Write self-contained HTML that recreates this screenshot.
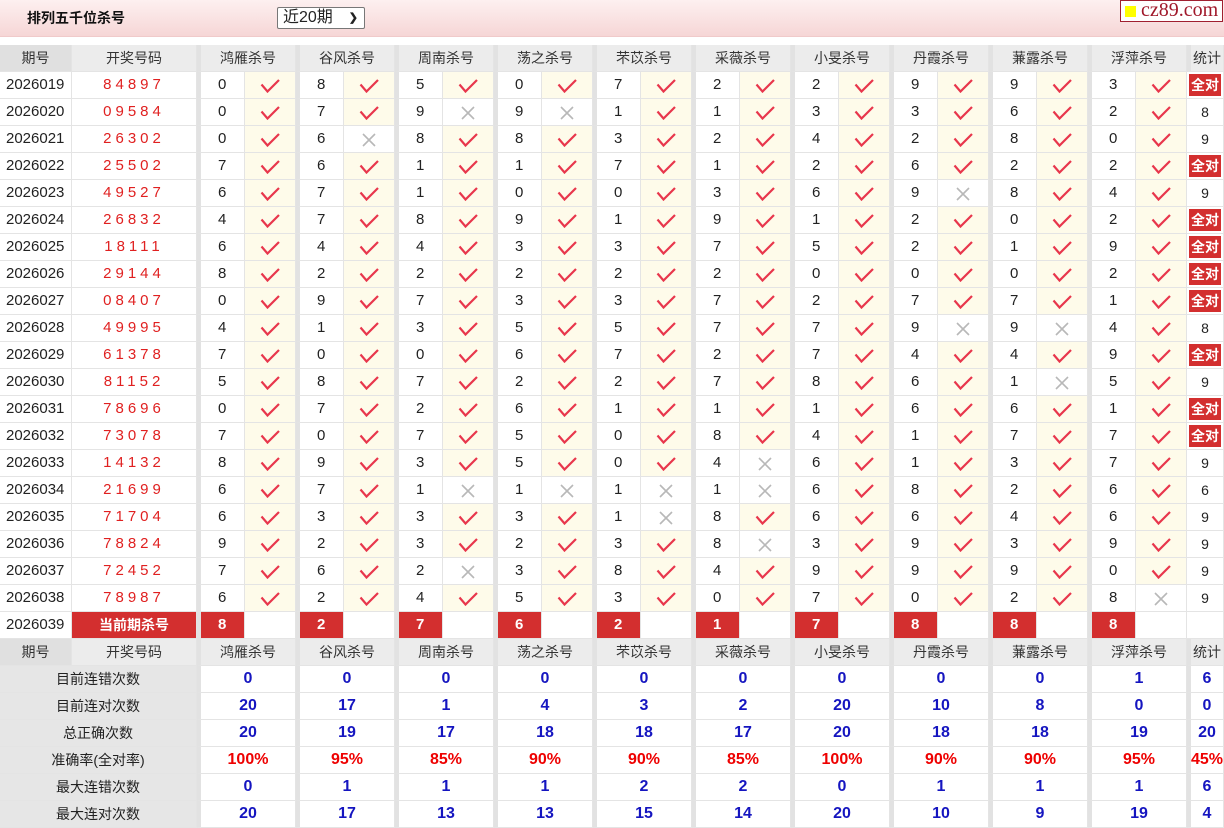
<!DOCTYPE html>
<html><head><meta charset="utf-8">
<style>
*{box-sizing:border-box;margin:0;padding:0}
body{width:1224px;height:827px;overflow:hidden;background:#fff;font-family:"Liberation Sans","Noto Sans CJK SC",sans-serif;font-size:14px;color:#222}
.top{position:absolute;left:0;top:0;width:1224px;height:37px;background:linear-gradient(#fdf0f0,#f6d6d6);border-bottom:1px solid #f0caca}
.title{position:absolute;left:27px;top:9px;font-weight:bold;font-size:14px;color:#111;line-height:18px}
.sel{position:absolute;left:277px;top:7px;width:88px;height:22px;border:1px solid #777;border-radius:2px;background:#fff;font-size:16px;padding-left:5px;line-height:20px}
.sel b{position:absolute;right:6px;top:0;font-size:11px}
.logo{position:absolute;left:1120px;top:0;width:103px;height:22px;border:1px solid #a02030;background:#fff;font-family:"Liberation Serif",serif;font-size:20px;color:#a0182a;line-height:19px;padding-left:20px}
.logo i{position:absolute;left:4px;top:5px;width:11px;height:11px;background:#ff0}
table{position:absolute;left:0;top:45px;border-collapse:separate;border-spacing:0;table-layout:fixed;width:1224px}
tr{height:27px}
td{height:27px;line-height:26px;border-right:1px solid #e4e4e4;border-bottom:1px solid #e4e4e4;text-align:center;padding:0;white-space:nowrap;overflow:hidden;font-size:14px}
td.p{text-align:left;padding-left:6px;font-size:15px}
.h td{background:#ececec;color:#333}
.h td.q{background:#e0e0e0}
td.n{border-left:4px solid #e2e2e2;text-align:left;padding-left:17px;font-size:15px}
td.c{background:#fefbea}
td.w{background:#fff}
.r{color:#e02020;letter-spacing:4px;font-size:15px}
.a{background:#d32f2f!important;color:#fff;font-weight:bold}
td.qd{padding:2px;line-height:22px}
td.qd span{display:block;background:#d32f2f;color:#fff;font-weight:bold;height:22px;line-height:22px}
.s td{background:#fff}
.s td.l{background:#e6e6e6;color:#222}
.s td.v{font-weight:bold;color:#1515c0;font-size:16px;border-left:4px solid #e2e2e2}
.s td.rd{color:#e00}
td svg{display:inline-block;vertical-align:middle}
</style></head><body>
<svg width="0" height="0" style="position:absolute"><defs>
<symbol id="k" viewBox="0 0 20 14"><path d="M1.5 5.5 L7.5 12.5 L19 1" fill="none" stroke="#e8364c" stroke-width="2.2"/></symbol>
<symbol id="x" viewBox="0 0 14 14"><path d="M1 1 L13 13 M13 1 L1 13" fill="none" stroke="#b8b8b8" stroke-width="1.6"/></symbol>
</defs></svg>
<div class="top"><div class="title">排列五千位杀号</div><div class="sel">近20期<b>&#10095;</b></div><div class="logo"><i></i>cz89.com</div></div>
<table id="t">
<colgroup><col style="width:72px"><col style="width:125px"><col style="width:48px"><col style="width:51px"><col style="width:48px"><col style="width:51px"><col style="width:48px"><col style="width:51px"><col style="width:48px"><col style="width:51px"><col style="width:48px"><col style="width:51px"><col style="width:48px"><col style="width:51px"><col style="width:48px"><col style="width:51px"><col style="width:48px"><col style="width:51px"><col style="width:48px"><col style="width:51px"><col style="width:48px"><col style="width:51px"><col style="width:37px"></colgroup>
<tr class="h"><td class="q">期号</td><td>开奖号码</td><td colspan="2" style="border-left:4px solid #e2e2e2">鸿雁杀号</td><td colspan="2" style="border-left:4px solid #e2e2e2">谷风杀号</td><td colspan="2" style="border-left:4px solid #e2e2e2">周南杀号</td><td colspan="2" style="border-left:4px solid #e2e2e2">荡之杀号</td><td colspan="2" style="border-left:4px solid #e2e2e2">芣苡杀号</td><td colspan="2" style="border-left:4px solid #e2e2e2">采薇杀号</td><td colspan="2" style="border-left:4px solid #e2e2e2">小旻杀号</td><td colspan="2" style="border-left:4px solid #e2e2e2">丹霞杀号</td><td colspan="2" style="border-left:4px solid #e2e2e2">蒹露杀号</td><td colspan="2" style="border-left:4px solid #e2e2e2">浮萍杀号</td><td style="border-left:4px solid #e2e2e2">统计</td></tr>
<tr><td class="p">2026019</td><td class="r">84897</td><td class="n">0</td><td class="c"><svg width="20" height="14"><use href="#k"/></svg></td><td class="n">8</td><td class="c"><svg width="20" height="14"><use href="#k"/></svg></td><td class="n">5</td><td class="c"><svg width="20" height="14"><use href="#k"/></svg></td><td class="n">0</td><td class="c"><svg width="20" height="14"><use href="#k"/></svg></td><td class="n">7</td><td class="c"><svg width="20" height="14"><use href="#k"/></svg></td><td class="n">2</td><td class="c"><svg width="20" height="14"><use href="#k"/></svg></td><td class="n">2</td><td class="c"><svg width="20" height="14"><use href="#k"/></svg></td><td class="n">9</td><td class="c"><svg width="20" height="14"><use href="#k"/></svg></td><td class="n">9</td><td class="c"><svg width="20" height="14"><use href="#k"/></svg></td><td class="n">3</td><td class="c"><svg width="20" height="14"><use href="#k"/></svg></td><td class="qd"><span>全对</span></td></tr>
<tr><td class="p">2026020</td><td class="r">09584</td><td class="n">0</td><td class="c"><svg width="20" height="14"><use href="#k"/></svg></td><td class="n">7</td><td class="c"><svg width="20" height="14"><use href="#k"/></svg></td><td class="n">9</td><td class="w"><svg width="14" height="14"><use href="#x"/></svg></td><td class="n">9</td><td class="w"><svg width="14" height="14"><use href="#x"/></svg></td><td class="n">1</td><td class="c"><svg width="20" height="14"><use href="#k"/></svg></td><td class="n">1</td><td class="c"><svg width="20" height="14"><use href="#k"/></svg></td><td class="n">3</td><td class="c"><svg width="20" height="14"><use href="#k"/></svg></td><td class="n">3</td><td class="c"><svg width="20" height="14"><use href="#k"/></svg></td><td class="n">6</td><td class="c"><svg width="20" height="14"><use href="#k"/></svg></td><td class="n">2</td><td class="c"><svg width="20" height="14"><use href="#k"/></svg></td><td>8</td></tr>
<tr><td class="p">2026021</td><td class="r">26302</td><td class="n">0</td><td class="c"><svg width="20" height="14"><use href="#k"/></svg></td><td class="n">6</td><td class="w"><svg width="14" height="14"><use href="#x"/></svg></td><td class="n">8</td><td class="c"><svg width="20" height="14"><use href="#k"/></svg></td><td class="n">8</td><td class="c"><svg width="20" height="14"><use href="#k"/></svg></td><td class="n">3</td><td class="c"><svg width="20" height="14"><use href="#k"/></svg></td><td class="n">2</td><td class="c"><svg width="20" height="14"><use href="#k"/></svg></td><td class="n">4</td><td class="c"><svg width="20" height="14"><use href="#k"/></svg></td><td class="n">2</td><td class="c"><svg width="20" height="14"><use href="#k"/></svg></td><td class="n">8</td><td class="c"><svg width="20" height="14"><use href="#k"/></svg></td><td class="n">0</td><td class="c"><svg width="20" height="14"><use href="#k"/></svg></td><td>9</td></tr>
<tr><td class="p">2026022</td><td class="r">25502</td><td class="n">7</td><td class="c"><svg width="20" height="14"><use href="#k"/></svg></td><td class="n">6</td><td class="c"><svg width="20" height="14"><use href="#k"/></svg></td><td class="n">1</td><td class="c"><svg width="20" height="14"><use href="#k"/></svg></td><td class="n">1</td><td class="c"><svg width="20" height="14"><use href="#k"/></svg></td><td class="n">7</td><td class="c"><svg width="20" height="14"><use href="#k"/></svg></td><td class="n">1</td><td class="c"><svg width="20" height="14"><use href="#k"/></svg></td><td class="n">2</td><td class="c"><svg width="20" height="14"><use href="#k"/></svg></td><td class="n">6</td><td class="c"><svg width="20" height="14"><use href="#k"/></svg></td><td class="n">2</td><td class="c"><svg width="20" height="14"><use href="#k"/></svg></td><td class="n">2</td><td class="c"><svg width="20" height="14"><use href="#k"/></svg></td><td class="qd"><span>全对</span></td></tr>
<tr><td class="p">2026023</td><td class="r">49527</td><td class="n">6</td><td class="c"><svg width="20" height="14"><use href="#k"/></svg></td><td class="n">7</td><td class="c"><svg width="20" height="14"><use href="#k"/></svg></td><td class="n">1</td><td class="c"><svg width="20" height="14"><use href="#k"/></svg></td><td class="n">0</td><td class="c"><svg width="20" height="14"><use href="#k"/></svg></td><td class="n">0</td><td class="c"><svg width="20" height="14"><use href="#k"/></svg></td><td class="n">3</td><td class="c"><svg width="20" height="14"><use href="#k"/></svg></td><td class="n">6</td><td class="c"><svg width="20" height="14"><use href="#k"/></svg></td><td class="n">9</td><td class="w"><svg width="14" height="14"><use href="#x"/></svg></td><td class="n">8</td><td class="c"><svg width="20" height="14"><use href="#k"/></svg></td><td class="n">4</td><td class="c"><svg width="20" height="14"><use href="#k"/></svg></td><td>9</td></tr>
<tr><td class="p">2026024</td><td class="r">26832</td><td class="n">4</td><td class="c"><svg width="20" height="14"><use href="#k"/></svg></td><td class="n">7</td><td class="c"><svg width="20" height="14"><use href="#k"/></svg></td><td class="n">8</td><td class="c"><svg width="20" height="14"><use href="#k"/></svg></td><td class="n">9</td><td class="c"><svg width="20" height="14"><use href="#k"/></svg></td><td class="n">1</td><td class="c"><svg width="20" height="14"><use href="#k"/></svg></td><td class="n">9</td><td class="c"><svg width="20" height="14"><use href="#k"/></svg></td><td class="n">1</td><td class="c"><svg width="20" height="14"><use href="#k"/></svg></td><td class="n">2</td><td class="c"><svg width="20" height="14"><use href="#k"/></svg></td><td class="n">0</td><td class="c"><svg width="20" height="14"><use href="#k"/></svg></td><td class="n">2</td><td class="c"><svg width="20" height="14"><use href="#k"/></svg></td><td class="qd"><span>全对</span></td></tr>
<tr><td class="p">2026025</td><td class="r">18111</td><td class="n">6</td><td class="c"><svg width="20" height="14"><use href="#k"/></svg></td><td class="n">4</td><td class="c"><svg width="20" height="14"><use href="#k"/></svg></td><td class="n">4</td><td class="c"><svg width="20" height="14"><use href="#k"/></svg></td><td class="n">3</td><td class="c"><svg width="20" height="14"><use href="#k"/></svg></td><td class="n">3</td><td class="c"><svg width="20" height="14"><use href="#k"/></svg></td><td class="n">7</td><td class="c"><svg width="20" height="14"><use href="#k"/></svg></td><td class="n">5</td><td class="c"><svg width="20" height="14"><use href="#k"/></svg></td><td class="n">2</td><td class="c"><svg width="20" height="14"><use href="#k"/></svg></td><td class="n">1</td><td class="c"><svg width="20" height="14"><use href="#k"/></svg></td><td class="n">9</td><td class="c"><svg width="20" height="14"><use href="#k"/></svg></td><td class="qd"><span>全对</span></td></tr>
<tr><td class="p">2026026</td><td class="r">29144</td><td class="n">8</td><td class="c"><svg width="20" height="14"><use href="#k"/></svg></td><td class="n">2</td><td class="c"><svg width="20" height="14"><use href="#k"/></svg></td><td class="n">2</td><td class="c"><svg width="20" height="14"><use href="#k"/></svg></td><td class="n">2</td><td class="c"><svg width="20" height="14"><use href="#k"/></svg></td><td class="n">2</td><td class="c"><svg width="20" height="14"><use href="#k"/></svg></td><td class="n">2</td><td class="c"><svg width="20" height="14"><use href="#k"/></svg></td><td class="n">0</td><td class="c"><svg width="20" height="14"><use href="#k"/></svg></td><td class="n">0</td><td class="c"><svg width="20" height="14"><use href="#k"/></svg></td><td class="n">0</td><td class="c"><svg width="20" height="14"><use href="#k"/></svg></td><td class="n">2</td><td class="c"><svg width="20" height="14"><use href="#k"/></svg></td><td class="qd"><span>全对</span></td></tr>
<tr><td class="p">2026027</td><td class="r">08407</td><td class="n">0</td><td class="c"><svg width="20" height="14"><use href="#k"/></svg></td><td class="n">9</td><td class="c"><svg width="20" height="14"><use href="#k"/></svg></td><td class="n">7</td><td class="c"><svg width="20" height="14"><use href="#k"/></svg></td><td class="n">3</td><td class="c"><svg width="20" height="14"><use href="#k"/></svg></td><td class="n">3</td><td class="c"><svg width="20" height="14"><use href="#k"/></svg></td><td class="n">7</td><td class="c"><svg width="20" height="14"><use href="#k"/></svg></td><td class="n">2</td><td class="c"><svg width="20" height="14"><use href="#k"/></svg></td><td class="n">7</td><td class="c"><svg width="20" height="14"><use href="#k"/></svg></td><td class="n">7</td><td class="c"><svg width="20" height="14"><use href="#k"/></svg></td><td class="n">1</td><td class="c"><svg width="20" height="14"><use href="#k"/></svg></td><td class="qd"><span>全对</span></td></tr>
<tr><td class="p">2026028</td><td class="r">49995</td><td class="n">4</td><td class="c"><svg width="20" height="14"><use href="#k"/></svg></td><td class="n">1</td><td class="c"><svg width="20" height="14"><use href="#k"/></svg></td><td class="n">3</td><td class="c"><svg width="20" height="14"><use href="#k"/></svg></td><td class="n">5</td><td class="c"><svg width="20" height="14"><use href="#k"/></svg></td><td class="n">5</td><td class="c"><svg width="20" height="14"><use href="#k"/></svg></td><td class="n">7</td><td class="c"><svg width="20" height="14"><use href="#k"/></svg></td><td class="n">7</td><td class="c"><svg width="20" height="14"><use href="#k"/></svg></td><td class="n">9</td><td class="w"><svg width="14" height="14"><use href="#x"/></svg></td><td class="n">9</td><td class="w"><svg width="14" height="14"><use href="#x"/></svg></td><td class="n">4</td><td class="c"><svg width="20" height="14"><use href="#k"/></svg></td><td>8</td></tr>
<tr><td class="p">2026029</td><td class="r">61378</td><td class="n">7</td><td class="c"><svg width="20" height="14"><use href="#k"/></svg></td><td class="n">0</td><td class="c"><svg width="20" height="14"><use href="#k"/></svg></td><td class="n">0</td><td class="c"><svg width="20" height="14"><use href="#k"/></svg></td><td class="n">6</td><td class="c"><svg width="20" height="14"><use href="#k"/></svg></td><td class="n">7</td><td class="c"><svg width="20" height="14"><use href="#k"/></svg></td><td class="n">2</td><td class="c"><svg width="20" height="14"><use href="#k"/></svg></td><td class="n">7</td><td class="c"><svg width="20" height="14"><use href="#k"/></svg></td><td class="n">4</td><td class="c"><svg width="20" height="14"><use href="#k"/></svg></td><td class="n">4</td><td class="c"><svg width="20" height="14"><use href="#k"/></svg></td><td class="n">9</td><td class="c"><svg width="20" height="14"><use href="#k"/></svg></td><td class="qd"><span>全对</span></td></tr>
<tr><td class="p">2026030</td><td class="r">81152</td><td class="n">5</td><td class="c"><svg width="20" height="14"><use href="#k"/></svg></td><td class="n">8</td><td class="c"><svg width="20" height="14"><use href="#k"/></svg></td><td class="n">7</td><td class="c"><svg width="20" height="14"><use href="#k"/></svg></td><td class="n">2</td><td class="c"><svg width="20" height="14"><use href="#k"/></svg></td><td class="n">2</td><td class="c"><svg width="20" height="14"><use href="#k"/></svg></td><td class="n">7</td><td class="c"><svg width="20" height="14"><use href="#k"/></svg></td><td class="n">8</td><td class="c"><svg width="20" height="14"><use href="#k"/></svg></td><td class="n">6</td><td class="c"><svg width="20" height="14"><use href="#k"/></svg></td><td class="n">1</td><td class="w"><svg width="14" height="14"><use href="#x"/></svg></td><td class="n">5</td><td class="c"><svg width="20" height="14"><use href="#k"/></svg></td><td>9</td></tr>
<tr><td class="p">2026031</td><td class="r">78696</td><td class="n">0</td><td class="c"><svg width="20" height="14"><use href="#k"/></svg></td><td class="n">7</td><td class="c"><svg width="20" height="14"><use href="#k"/></svg></td><td class="n">2</td><td class="c"><svg width="20" height="14"><use href="#k"/></svg></td><td class="n">6</td><td class="c"><svg width="20" height="14"><use href="#k"/></svg></td><td class="n">1</td><td class="c"><svg width="20" height="14"><use href="#k"/></svg></td><td class="n">1</td><td class="c"><svg width="20" height="14"><use href="#k"/></svg></td><td class="n">1</td><td class="c"><svg width="20" height="14"><use href="#k"/></svg></td><td class="n">6</td><td class="c"><svg width="20" height="14"><use href="#k"/></svg></td><td class="n">6</td><td class="c"><svg width="20" height="14"><use href="#k"/></svg></td><td class="n">1</td><td class="c"><svg width="20" height="14"><use href="#k"/></svg></td><td class="qd"><span>全对</span></td></tr>
<tr><td class="p">2026032</td><td class="r">73078</td><td class="n">7</td><td class="c"><svg width="20" height="14"><use href="#k"/></svg></td><td class="n">0</td><td class="c"><svg width="20" height="14"><use href="#k"/></svg></td><td class="n">7</td><td class="c"><svg width="20" height="14"><use href="#k"/></svg></td><td class="n">5</td><td class="c"><svg width="20" height="14"><use href="#k"/></svg></td><td class="n">0</td><td class="c"><svg width="20" height="14"><use href="#k"/></svg></td><td class="n">8</td><td class="c"><svg width="20" height="14"><use href="#k"/></svg></td><td class="n">4</td><td class="c"><svg width="20" height="14"><use href="#k"/></svg></td><td class="n">1</td><td class="c"><svg width="20" height="14"><use href="#k"/></svg></td><td class="n">7</td><td class="c"><svg width="20" height="14"><use href="#k"/></svg></td><td class="n">7</td><td class="c"><svg width="20" height="14"><use href="#k"/></svg></td><td class="qd"><span>全对</span></td></tr>
<tr><td class="p">2026033</td><td class="r">14132</td><td class="n">8</td><td class="c"><svg width="20" height="14"><use href="#k"/></svg></td><td class="n">9</td><td class="c"><svg width="20" height="14"><use href="#k"/></svg></td><td class="n">3</td><td class="c"><svg width="20" height="14"><use href="#k"/></svg></td><td class="n">5</td><td class="c"><svg width="20" height="14"><use href="#k"/></svg></td><td class="n">0</td><td class="c"><svg width="20" height="14"><use href="#k"/></svg></td><td class="n">4</td><td class="w"><svg width="14" height="14"><use href="#x"/></svg></td><td class="n">6</td><td class="c"><svg width="20" height="14"><use href="#k"/></svg></td><td class="n">1</td><td class="c"><svg width="20" height="14"><use href="#k"/></svg></td><td class="n">3</td><td class="c"><svg width="20" height="14"><use href="#k"/></svg></td><td class="n">7</td><td class="c"><svg width="20" height="14"><use href="#k"/></svg></td><td>9</td></tr>
<tr><td class="p">2026034</td><td class="r">21699</td><td class="n">6</td><td class="c"><svg width="20" height="14"><use href="#k"/></svg></td><td class="n">7</td><td class="c"><svg width="20" height="14"><use href="#k"/></svg></td><td class="n">1</td><td class="w"><svg width="14" height="14"><use href="#x"/></svg></td><td class="n">1</td><td class="w"><svg width="14" height="14"><use href="#x"/></svg></td><td class="n">1</td><td class="w"><svg width="14" height="14"><use href="#x"/></svg></td><td class="n">1</td><td class="w"><svg width="14" height="14"><use href="#x"/></svg></td><td class="n">6</td><td class="c"><svg width="20" height="14"><use href="#k"/></svg></td><td class="n">8</td><td class="c"><svg width="20" height="14"><use href="#k"/></svg></td><td class="n">2</td><td class="c"><svg width="20" height="14"><use href="#k"/></svg></td><td class="n">6</td><td class="c"><svg width="20" height="14"><use href="#k"/></svg></td><td>6</td></tr>
<tr><td class="p">2026035</td><td class="r">71704</td><td class="n">6</td><td class="c"><svg width="20" height="14"><use href="#k"/></svg></td><td class="n">3</td><td class="c"><svg width="20" height="14"><use href="#k"/></svg></td><td class="n">3</td><td class="c"><svg width="20" height="14"><use href="#k"/></svg></td><td class="n">3</td><td class="c"><svg width="20" height="14"><use href="#k"/></svg></td><td class="n">1</td><td class="w"><svg width="14" height="14"><use href="#x"/></svg></td><td class="n">8</td><td class="c"><svg width="20" height="14"><use href="#k"/></svg></td><td class="n">6</td><td class="c"><svg width="20" height="14"><use href="#k"/></svg></td><td class="n">6</td><td class="c"><svg width="20" height="14"><use href="#k"/></svg></td><td class="n">4</td><td class="c"><svg width="20" height="14"><use href="#k"/></svg></td><td class="n">6</td><td class="c"><svg width="20" height="14"><use href="#k"/></svg></td><td>9</td></tr>
<tr><td class="p">2026036</td><td class="r">78824</td><td class="n">9</td><td class="c"><svg width="20" height="14"><use href="#k"/></svg></td><td class="n">2</td><td class="c"><svg width="20" height="14"><use href="#k"/></svg></td><td class="n">3</td><td class="c"><svg width="20" height="14"><use href="#k"/></svg></td><td class="n">2</td><td class="c"><svg width="20" height="14"><use href="#k"/></svg></td><td class="n">3</td><td class="c"><svg width="20" height="14"><use href="#k"/></svg></td><td class="n">8</td><td class="w"><svg width="14" height="14"><use href="#x"/></svg></td><td class="n">3</td><td class="c"><svg width="20" height="14"><use href="#k"/></svg></td><td class="n">9</td><td class="c"><svg width="20" height="14"><use href="#k"/></svg></td><td class="n">3</td><td class="c"><svg width="20" height="14"><use href="#k"/></svg></td><td class="n">9</td><td class="c"><svg width="20" height="14"><use href="#k"/></svg></td><td>9</td></tr>
<tr><td class="p">2026037</td><td class="r">72452</td><td class="n">7</td><td class="c"><svg width="20" height="14"><use href="#k"/></svg></td><td class="n">6</td><td class="c"><svg width="20" height="14"><use href="#k"/></svg></td><td class="n">2</td><td class="w"><svg width="14" height="14"><use href="#x"/></svg></td><td class="n">3</td><td class="c"><svg width="20" height="14"><use href="#k"/></svg></td><td class="n">8</td><td class="c"><svg width="20" height="14"><use href="#k"/></svg></td><td class="n">4</td><td class="c"><svg width="20" height="14"><use href="#k"/></svg></td><td class="n">9</td><td class="c"><svg width="20" height="14"><use href="#k"/></svg></td><td class="n">9</td><td class="c"><svg width="20" height="14"><use href="#k"/></svg></td><td class="n">9</td><td class="c"><svg width="20" height="14"><use href="#k"/></svg></td><td class="n">0</td><td class="c"><svg width="20" height="14"><use href="#k"/></svg></td><td>9</td></tr>
<tr><td class="p">2026038</td><td class="r">78987</td><td class="n">6</td><td class="c"><svg width="20" height="14"><use href="#k"/></svg></td><td class="n">2</td><td class="c"><svg width="20" height="14"><use href="#k"/></svg></td><td class="n">4</td><td class="c"><svg width="20" height="14"><use href="#k"/></svg></td><td class="n">5</td><td class="c"><svg width="20" height="14"><use href="#k"/></svg></td><td class="n">3</td><td class="c"><svg width="20" height="14"><use href="#k"/></svg></td><td class="n">0</td><td class="c"><svg width="20" height="14"><use href="#k"/></svg></td><td class="n">7</td><td class="c"><svg width="20" height="14"><use href="#k"/></svg></td><td class="n">0</td><td class="c"><svg width="20" height="14"><use href="#k"/></svg></td><td class="n">2</td><td class="c"><svg width="20" height="14"><use href="#k"/></svg></td><td class="n">8</td><td class="w"><svg width="14" height="14"><use href="#x"/></svg></td><td>9</td></tr>
<tr><td class="p">2026039</td><td class="a">当前期杀号</td><td class="n a">8</td><td class="w"></td><td class="n a">2</td><td class="w"></td><td class="n a">7</td><td class="w"></td><td class="n a">6</td><td class="w"></td><td class="n a">2</td><td class="w"></td><td class="n a">1</td><td class="w"></td><td class="n a">7</td><td class="w"></td><td class="n a">8</td><td class="w"></td><td class="n a">8</td><td class="w"></td><td class="n a">8</td><td class="w"></td><td></td></tr>
<tr class="h"><td class="q" style="text-align:center">期号</td><td>开奖号码</td><td colspan="2" style="border-left:4px solid #e2e2e2">鸿雁杀号</td><td colspan="2" style="border-left:4px solid #e2e2e2">谷风杀号</td><td colspan="2" style="border-left:4px solid #e2e2e2">周南杀号</td><td colspan="2" style="border-left:4px solid #e2e2e2">荡之杀号</td><td colspan="2" style="border-left:4px solid #e2e2e2">芣苡杀号</td><td colspan="2" style="border-left:4px solid #e2e2e2">采薇杀号</td><td colspan="2" style="border-left:4px solid #e2e2e2">小旻杀号</td><td colspan="2" style="border-left:4px solid #e2e2e2">丹霞杀号</td><td colspan="2" style="border-left:4px solid #e2e2e2">蒹露杀号</td><td colspan="2" style="border-left:4px solid #e2e2e2">浮萍杀号</td><td style="border-left:4px solid #e2e2e2">统计</td></tr>
<tr class="s"><td class="l" colspan="2">目前连错次数</td><td class="v" colspan="2">0</td><td class="v" colspan="2">0</td><td class="v" colspan="2">0</td><td class="v" colspan="2">0</td><td class="v" colspan="2">0</td><td class="v" colspan="2">0</td><td class="v" colspan="2">0</td><td class="v" colspan="2">0</td><td class="v" colspan="2">0</td><td class="v" colspan="2">1</td><td class="v">6</td></tr>
<tr class="s"><td class="l" colspan="2">目前连对次数</td><td class="v" colspan="2">20</td><td class="v" colspan="2">17</td><td class="v" colspan="2">1</td><td class="v" colspan="2">4</td><td class="v" colspan="2">3</td><td class="v" colspan="2">2</td><td class="v" colspan="2">20</td><td class="v" colspan="2">10</td><td class="v" colspan="2">8</td><td class="v" colspan="2">0</td><td class="v">0</td></tr>
<tr class="s"><td class="l" colspan="2">总正确次数</td><td class="v" colspan="2">20</td><td class="v" colspan="2">19</td><td class="v" colspan="2">17</td><td class="v" colspan="2">18</td><td class="v" colspan="2">18</td><td class="v" colspan="2">17</td><td class="v" colspan="2">20</td><td class="v" colspan="2">18</td><td class="v" colspan="2">18</td><td class="v" colspan="2">19</td><td class="v">20</td></tr>
<tr class="s"><td class="l" colspan="2">准确率(全对率)</td><td class="v rd" colspan="2">100%</td><td class="v rd" colspan="2">95%</td><td class="v rd" colspan="2">85%</td><td class="v rd" colspan="2">90%</td><td class="v rd" colspan="2">90%</td><td class="v rd" colspan="2">85%</td><td class="v rd" colspan="2">100%</td><td class="v rd" colspan="2">90%</td><td class="v rd" colspan="2">90%</td><td class="v rd" colspan="2">95%</td><td class="v rd">45%</td></tr>
<tr class="s"><td class="l" colspan="2">最大连错次数</td><td class="v" colspan="2">0</td><td class="v" colspan="2">1</td><td class="v" colspan="2">1</td><td class="v" colspan="2">1</td><td class="v" colspan="2">2</td><td class="v" colspan="2">2</td><td class="v" colspan="2">0</td><td class="v" colspan="2">1</td><td class="v" colspan="2">1</td><td class="v" colspan="2">1</td><td class="v">6</td></tr>
<tr class="s"><td class="l" colspan="2">最大连对次数</td><td class="v" colspan="2">20</td><td class="v" colspan="2">17</td><td class="v" colspan="2">13</td><td class="v" colspan="2">13</td><td class="v" colspan="2">15</td><td class="v" colspan="2">14</td><td class="v" colspan="2">20</td><td class="v" colspan="2">10</td><td class="v" colspan="2">9</td><td class="v" colspan="2">19</td><td class="v">4</td></tr>
</table>
</body></html>
